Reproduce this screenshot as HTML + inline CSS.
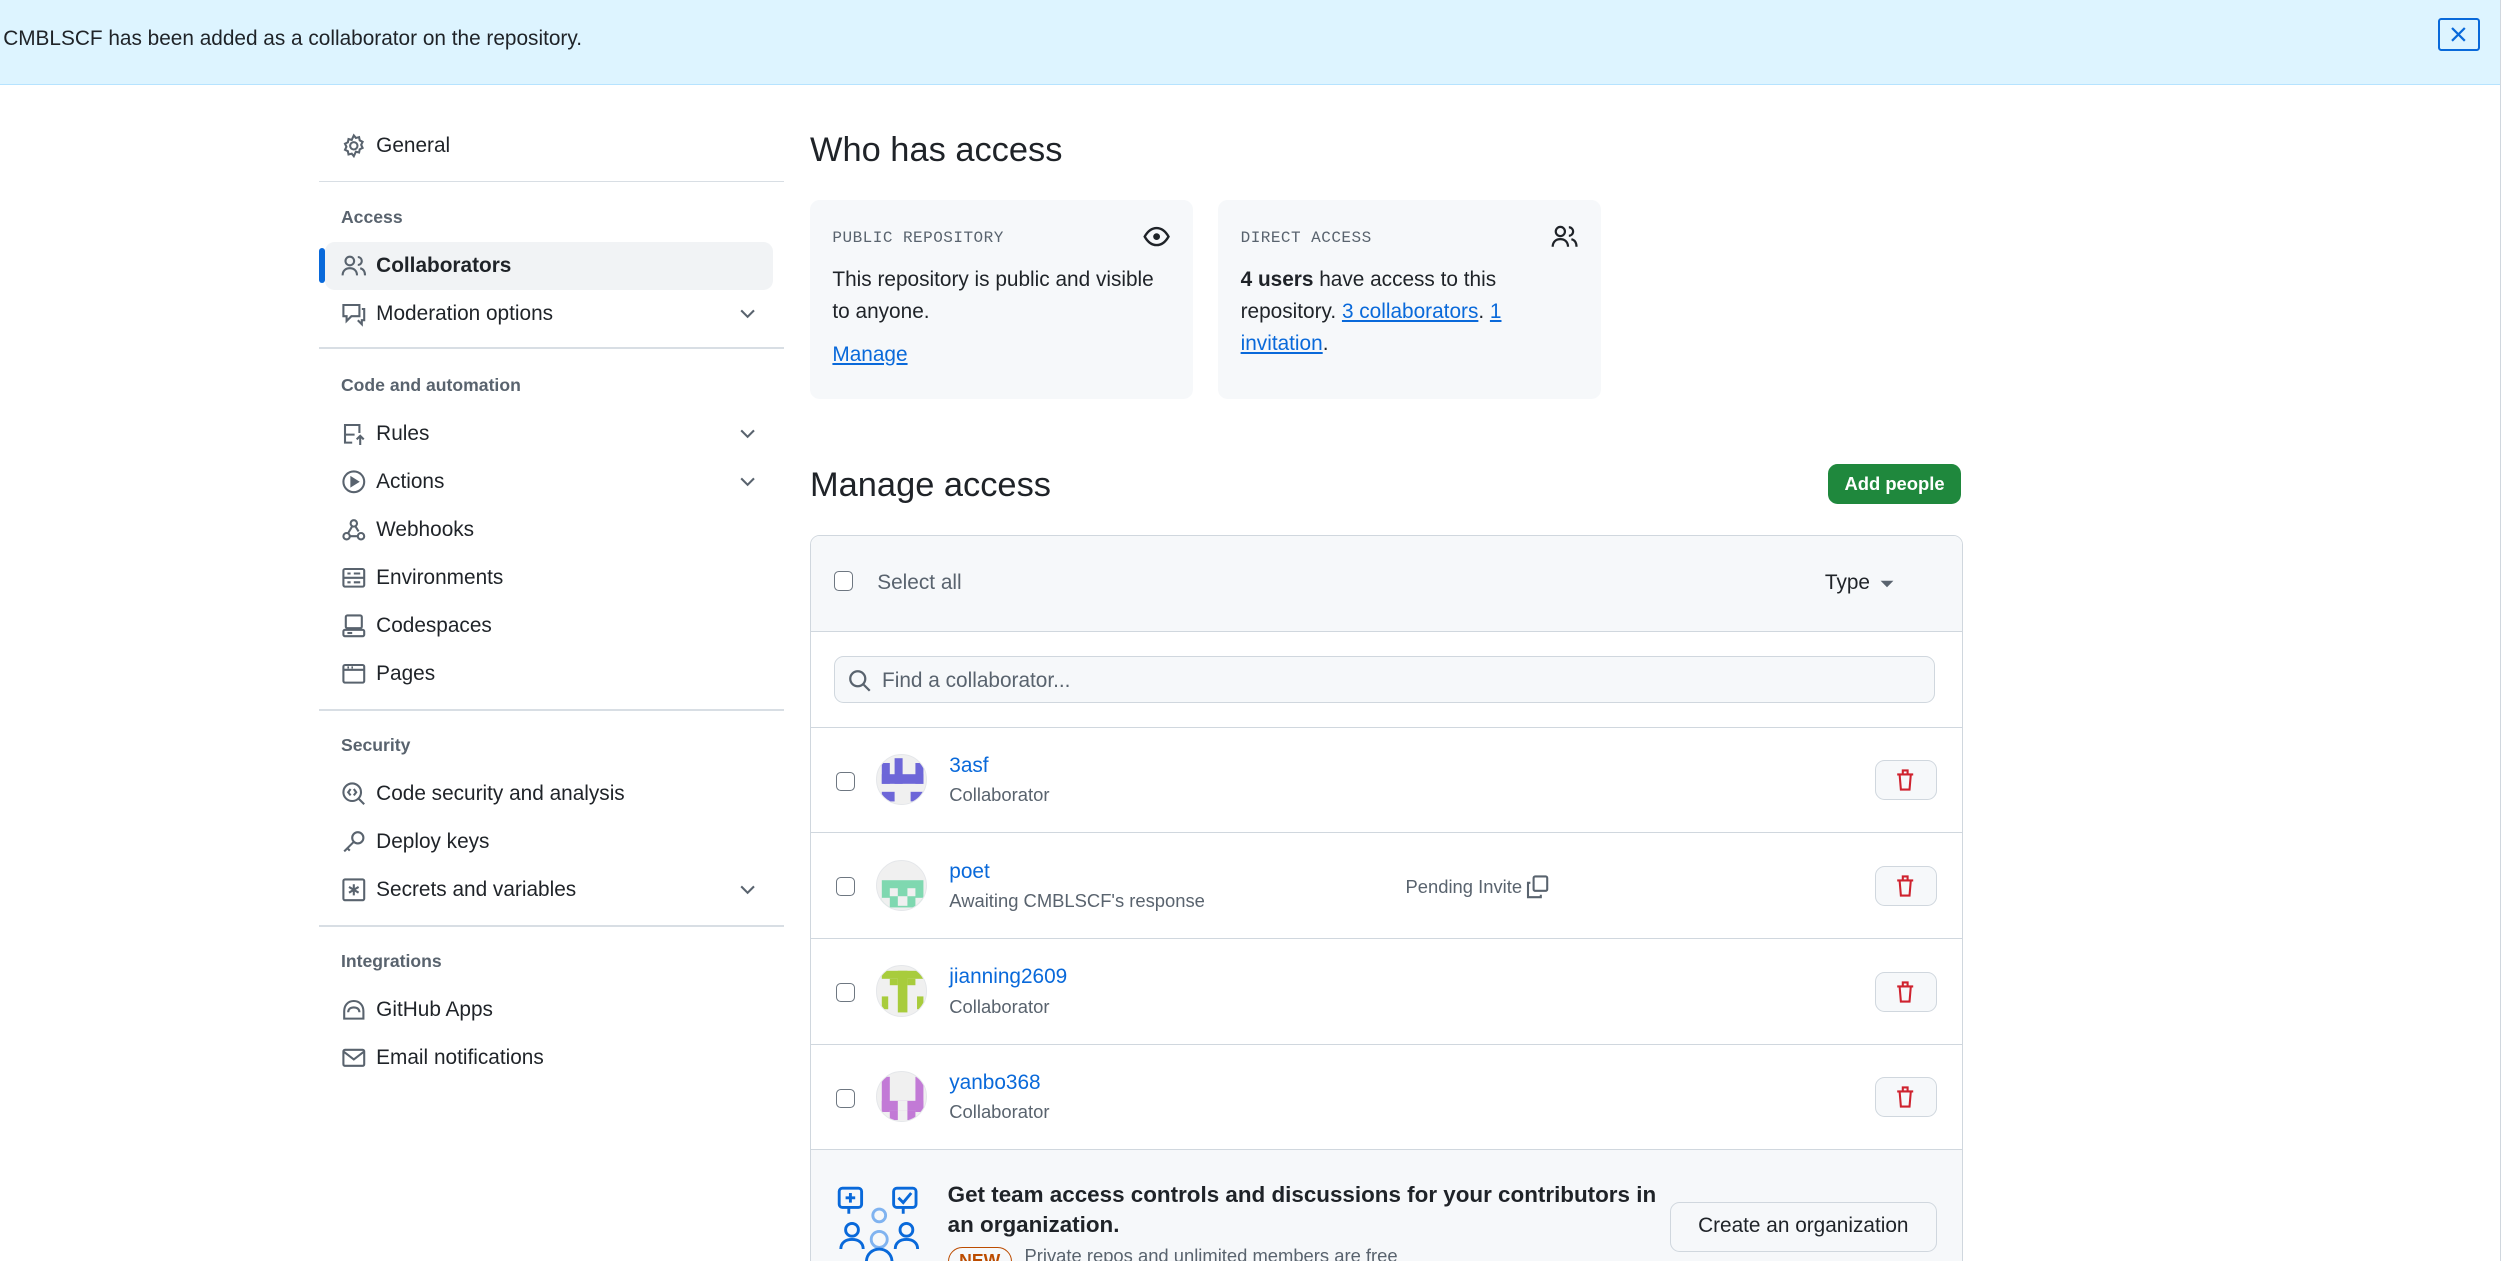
<!DOCTYPE html>
<html><head><meta charset="utf-8"><style>
*{box-sizing:border-box;margin:0;padding:0}
html,body{width:2510px;height:1261px;overflow:hidden;background:#fff}
#w{zoom:1.6008;width:1568px;height:788px;position:relative;font-family:"Liberation Sans",sans-serif;color:#1f2328;font-size:13px}
.a{position:absolute}
.ban{left:0;top:0;width:1562px;height:53px;background:#ddf4ff;border-bottom:1px solid #b6e3ff}
.sb{left:1562px;top:0;width:6px;height:788px;background:#fff;border-left:1px solid #d0d7de}
.nav{left:213px;font-size:13px;display:flex;align-items:center;gap:6px;height:20px}
.nav svg{width:16px;height:16px;fill:none;stroke:#59636e;stroke-width:1.3}
.sec{left:213px;font-size:11px;font-weight:bold;color:#59636e}
.sep{left:199px;width:291px;height:1px;background:#d8dee4}
.chev{left:461px;width:12px;height:12px}
.card{background:#f6f8fa;border-radius:6px;width:239px;height:124px;top:125px}
.lab{font-family:"Liberation Mono",monospace;font-size:10px;color:#59636e;letter-spacing:.3px}
a{color:#0969da;text-decoration:underline}
.row{left:506px;width:720px;height:66px;border-top:1px solid #d0d7de}
.cb{width:12px;height:12px;border:1px solid #6e7781;border-radius:3px;background:#fff}
.av{width:32px;height:32px;border-radius:50%;background:#f0f0f0;overflow:hidden;border:1px solid #e5e7ea}
.tr{width:39px;height:25px;border:1px solid #d0d7de;border-radius:6px;background:#f6f8fa}
</style></head><body><div id="w">
<div class="a ban"></div>
<div class="a" style="left:2px;top:17px;font-size:13px">CMBLSCF has been added as a collaborator on the repository.</div>
<div class="a" style="left:1523px;top:11px;width:26px;height:21px;border:1.5px solid #0969da;border-radius:2px"><svg width="23" height="18" viewBox="0 0 23 18"><path d="M7.5 5l8 8M15.5 5l-8 8" stroke="#0969da" stroke-width="1.4"/></svg></div>
<div class="a sb"></div>

<div class="a" style="left:203px;top:151px;width:280px;height:30px;background:#f1f3f5;border-radius:6px"></div>
<div class="a" style="left:199px;top:155px;width:4px;height:22px;background:#0969da;border-radius:2px"></div>
<div class="a nav" style="top:81px"><svg viewBox="0 0 16 16"><circle cx="8" cy="8" r="2.3"/><path d="M8 1.5l1.3 1.6 2-.5.4 2 1.8.9-.9 1.9.9 1.9-1.8.9-.4 2-2-.5L8 14.5l-1.3-1.6-2 .5-.4-2-1.8-.9.9-1.9-.9-1.9 1.8-.9.4-2 2 .5z"/></svg>General</div>
<div class="a sep" style="top:113px"></div>
<div class="a sec" style="top:129px">Access</div>
<div class="a nav" style="top:156px;font-weight:bold"><svg viewBox="0 0 16 16"><circle cx="5.5" cy="5" r="2.7"/><path d="M1 14c0-3 2-4.5 4.5-4.5S10 11 10 14M10.5 2.5a2.5 2.5 0 010 5M12 9.5c2 .5 3 2 3 4.5"/></svg>Collaborators</div>
<div class="a nav" style="top:186px"><svg viewBox="0 0 16 16"><path d="M1.5 2.5h10v7h-5l-3 3v-3h-2zM13 5h1.5v7h-1.5v2.5l-2.5-2.5"/></svg>Moderation options</div>
<div class="a sep" style="top:217px"></div>
<div class="a sec" style="top:234px">Code and automation</div>
<div class="a nav" style="top:261px"><svg viewBox="0 0 16 16"><path d="M7 13.5H2.5v-11h9v5M2.5 8.5h6M12 15V9.5M9.8 11.5l2.2-2.2 2.2 2.2"/></svg>Rules</div>
<div class="a nav" style="top:291px"><svg viewBox="0 0 16 16"><circle cx="8" cy="8" r="6.5"/><path d="M6.5 5.5v5l4-2.5z" fill="#59636e"/></svg>Actions</div>
<div class="a nav" style="top:321px"><svg viewBox="0 0 16 16"><circle cx="8" cy="4" r="2"/><circle cx="3.5" cy="12" r="2"/><circle cx="12.5" cy="12" r="2"/><path d="M7 5.8L4.5 10M9 5.8L11 9M5.5 12h5"/></svg>Webhooks</div>
<div class="a nav" style="top:351px"><svg viewBox="0 0 16 16"><rect x="1.5" y="2.5" width="13" height="11" rx="1"/><path d="M1.5 8h13M4 5.3h2M4 10.8h2M8 5.3h4M8 10.8h4"/></svg>Environments</div>
<div class="a nav" style="top:381px"><svg viewBox="0 0 16 16"><rect x="3" y="1.5" width="10" height="8" rx="1"/><rect x="1.5" y="10.5" width="13" height="4" rx="1"/><path d="M4 12.5h3"/></svg>Codespaces</div>
<div class="a nav" style="top:411px"><svg viewBox="0 0 16 16"><rect x="1.5" y="2.5" width="13" height="11" rx="1"/><path d="M1.5 5.5h13M4 4h1M6.5 4h1"/></svg>Pages</div>
<div class="a sep" style="top:443px"></div>
<div class="a sec" style="top:459px">Security</div>
<div class="a nav" style="top:486px"><svg viewBox="0 0 16 16"><circle cx="7" cy="7" r="5.5"/><path d="M11 11l3.5 3.5M6 5L4.5 7 6 9M8 5l1.5 2L8 9"/></svg>Code security and analysis</div>
<div class="a nav" style="top:516px"><svg viewBox="0 0 16 16"><circle cx="10.5" cy="5.5" r="3.5"/><path d="M8 8l-6 6M4 12l1.5 1.5"/></svg>Deploy keys</div>
<div class="a nav" style="top:546px"><svg viewBox="0 0 16 16"><rect x="1.5" y="1.5" width="13" height="13" rx="1"/><path d="M8 4.5v7M5 6.2l6 3.6M11 6.2l-6 3.6"/></svg>Secrets and variables</div>
<div class="a sep" style="top:578px"></div>
<div class="a sec" style="top:594px">Integrations</div>
<div class="a nav" style="top:621px"><svg viewBox="0 0 16 16"><path d="M2 9c0-4 2.5-6.5 6-6.5S14 5 14 9v4.5H2zM4.5 9.5c0-2 1.5-3 3.5-3s3.5 1 3.5 3"/></svg>GitHub Apps</div>
<div class="a nav" style="top:651px"><svg viewBox="0 0 16 16"><rect x="1.5" y="3" width="13" height="10" rx="1"/><path d="M1.5 4l6.5 5 6.5-5"/></svg>Email notifications</div>
<svg class="a chev" style="top:190px" viewBox="0 0 12 12"><path d="M2 4l4 4 4-4" fill="none" stroke="#59636e" stroke-width="1.3"/></svg>
<svg class="a chev" style="top:265px" viewBox="0 0 12 12"><path d="M2 4l4 4 4-4" fill="none" stroke="#59636e" stroke-width="1.3"/></svg>
<svg class="a chev" style="top:295px" viewBox="0 0 12 12"><path d="M2 4l4 4 4-4" fill="none" stroke="#59636e" stroke-width="1.3"/></svg>
<svg class="a chev" style="top:550px" viewBox="0 0 12 12"><path d="M2 4l4 4 4-4" fill="none" stroke="#59636e" stroke-width="1.3"/></svg>

<div class="a" style="left:506px;top:82px;font-size:21.5px">Who has access</div>
<div class="a card" style="left:506px"></div>
<div class="a card" style="left:761px"></div>
<div class="a lab" style="left:520px;top:143px">PUBLIC REPOSITORY</div>
<svg class="a" style="left:714px;top:139px" width="17" height="17" viewBox="0 0 16 16"><path d="M1 8c2-3.5 4.5-5 7-5s5 1.5 7 5c-2 3.5-4.5 5-7 5S3 11.5 1 8z" fill="none" stroke="#1f2328" stroke-width="1.4"/><circle cx="8" cy="8" r="2" fill="#1f2328"/></svg>
<div class="a" style="left:520px;top:165px;width:215px;line-height:20px">This repository is public and visible to anyone.</div>
<div class="a" style="left:520px;top:214px"><a>Manage</a></div>
<div class="a lab" style="left:775px;top:143px">DIRECT ACCESS</div>
<svg class="a" style="left:969px;top:139px" width="17" height="17" viewBox="0 0 16 16"><circle cx="5.5" cy="5" r="2.7" fill="none" stroke="#1f2328" stroke-width="1.3"/><path d="M1 14c0-3 2-4.5 4.5-4.5S10 11 10 14M10.5 2.5a2.5 2.5 0 010 5M12 9.5c2 .5 3 2 3 4.5" fill="none" stroke="#1f2328" stroke-width="1.3"/></svg>
<div class="a" style="left:775px;top:165px;width:180px;line-height:20px"><b>4 users</b> have access to this repository. <a>3 collaborators</a>. <a>1 invitation</a>.</div>

<div class="a" style="left:506px;top:291px;font-size:21.5px">Manage access</div>
<div class="a" style="left:1142px;top:290px;width:83px;height:25px;background:#1f883d;border-radius:6px;color:#fff;font-size:11.5px;font-weight:bold;text-align:center;line-height:25px">Add people</div>

<div class="a" style="left:506px;top:334px;width:720px;height:460px;border:1px solid #d0d7de;border-radius:6px 6px 0 0;overflow:hidden">
<div style="height:60px;background:#f6f8fa"></div>
</div>
<div class="a cb" style="left:521px;top:357px"></div>
<div class="a" style="left:548px;top:357px;color:#59636e">Select all</div>
<div class="a" style="left:1140px;top:357px">Type</div>
<svg class="a" style="left:1174px;top:360px" width="10" height="10"><path d="M1 3l4 4 4-4z" fill="#59636e"/></svg>
<div class="a" style="left:506px;top:394px;width:720px;height:1px;background:#d0d7de"></div>
<div class="a" style="left:521px;top:410px;width:688px;height:29px;border:1px solid #d0d7de;border-radius:6px;background:#f6f8fa"></div>
<svg class="a" style="left:530px;top:418px" width="15" height="15" viewBox="0 0 16 16"><circle cx="6.5" cy="6.5" r="5" fill="none" stroke="#59636e" stroke-width="1.5"/><path d="M10.5 10.5l4 4" stroke="#59636e" stroke-width="1.5"/></svg>
<div class="a" style="left:551px;top:418px;color:#59636e">Find a collaborator...</div>

<div class="a row" style="top:454px"></div>
<div class="a row" style="top:520px"></div>
<div class="a row" style="top:586px"></div>
<div class="a row" style="top:652px"></div>
<div class="a" style="left:506px;top:718px;width:720px;height:70px;background:#f6f8fa;border-top:1px solid #d0d7de;border-left:1px solid #d0d7de;border-right:1px solid #d0d7de"></div>

<div class="a cb" style="left:522px;top:482px"></div>
<div class="a av" style="left:547px;top:471px"><svg width="32" height="32"><rect x="3" y="5" width="5" height="13" fill="#6d66d8"/><rect x="24" y="5" width="5" height="13" fill="#6d66d8"/><rect x="11" y="2" width="5" height="16" fill="#6d66d8"/><rect x="3" y="12" width="26" height="6" fill="#6d66d8"/><rect x="3" y="23" width="8" height="6" fill="#6d66d8"/><rect x="21" y="23" width="8" height="6" fill="#6d66d8"/></svg></div>
<div class="a" style="left:593px;top:471px;color:#0969da">3asf</div>
<div class="a" style="left:593px;top:490px;font-size:11.5px;color:#59636e">Collaborator</div>

<div class="a cb" style="left:522px;top:548px"></div>
<div class="a av" style="left:547px;top:537px"><svg width="32" height="32"><rect x="3" y="12" width="26" height="17" fill="#7fd8b0"/><rect x="8" y="17" width="5" height="5" fill="#f0f0f0"/><rect x="19" y="17" width="5" height="5" fill="#f0f0f0"/><rect x="13" y="22" width="6" height="6" fill="#f0f0f0"/><rect x="3" y="23" width="5" height="6" fill="#f0f0f0"/><rect x="24" y="23" width="5" height="6" fill="#f0f0f0"/></svg></div>
<div class="a" style="left:593px;top:537px;color:#0969da">poet</div>
<div class="a" style="left:593px;top:556px;font-size:11.5px;color:#59636e">Awaiting CMBLSCF's response</div>
<div class="a" style="left:878px;top:547px;font-size:11.5px;color:#59636e">Pending Invite</div>
<svg class="a" style="left:952px;top:546px" width="16" height="16" viewBox="0 0 16 16"><rect x="6" y="1.5" width="8.5" height="9" rx="1" fill="none" stroke="#59636e" stroke-width="1.3"/><path d="M4 5.5H2.5v9h8V13" fill="none" stroke="#59636e" stroke-width="1.3"/></svg>

<div class="a cb" style="left:522px;top:614px"></div>
<div class="a av" style="left:547px;top:603px"><svg width="32" height="32"><rect x="3" y="3" width="26" height="5" fill="#a8cc3c"/><rect x="13" y="3" width="6" height="26" fill="#a8cc3c"/><rect x="3" y="19" width="4" height="8" fill="#a8cc3c"/><rect x="25" y="19" width="4" height="8" fill="#a8cc3c"/><rect x="8" y="8" width="5" height="4" fill="#a8cc3c"/><rect x="19" y="8" width="5" height="4" fill="#a8cc3c"/></svg></div>
<div class="a" style="left:593px;top:603px;color:#0969da">jianning2609</div>
<div class="a" style="left:593px;top:622px;font-size:11.5px;color:#59636e">Collaborator</div>

<div class="a cb" style="left:522px;top:680px"></div>
<div class="a av" style="left:547px;top:669px"><svg width="32" height="32"><rect x="3" y="3" width="5" height="22" fill="#c27ad6"/><rect x="24" y="3" width="5" height="22" fill="#c27ad6"/><rect x="3" y="18" width="26" height="6" fill="#c27ad6"/><rect x="8" y="24" width="5" height="6" fill="#c27ad6"/><rect x="19" y="24" width="5" height="6" fill="#c27ad6"/><rect x="13" y="18" width="6" height="6" fill="#f0f0f0"/></svg></div>
<div class="a" style="left:593px;top:669px;color:#0969da">yanbo368</div>
<div class="a" style="left:593px;top:688px;font-size:11.5px;color:#59636e">Collaborator</div>

<div class="a tr" style="left:1171px;top:475px"></div>
<div class="a tr" style="left:1171px;top:541px"></div>
<div class="a tr" style="left:1171px;top:607px"></div>
<div class="a tr" style="left:1171px;top:673px"></div>
<svg class="a" style="left:1183px;top:480px" width="14" height="15" viewBox="0 0 14 15"><path d="M2 4h10M5.5 4V1.5h3V4M3.5 4l.8 9.5h5.4L10.5 4" fill="none" stroke="#cf222e" stroke-width="1.3"/></svg>
<svg class="a" style="left:1183px;top:546px" width="14" height="15" viewBox="0 0 14 15"><path d="M2 4h10M5.5 4V1.5h3V4M3.5 4l.8 9.5h5.4L10.5 4" fill="none" stroke="#cf222e" stroke-width="1.3"/></svg>
<svg class="a" style="left:1183px;top:612px" width="14" height="15" viewBox="0 0 14 15"><path d="M2 4h10M5.5 4V1.5h3V4M3.5 4l.8 9.5h5.4L10.5 4" fill="none" stroke="#cf222e" stroke-width="1.3"/></svg>
<svg class="a" style="left:1183px;top:678px" width="14" height="15" viewBox="0 0 14 15"><path d="M2 4h10M5.5 4V1.5h3V4M3.5 4l.8 9.5h5.4L10.5 4" fill="none" stroke="#cf222e" stroke-width="1.3"/></svg>

<svg class="a" style="left:522px;top:740px" width="54" height="48" viewBox="0 0 54 48" fill="none" stroke="#0969da" stroke-width="1.8"><rect x="2" y="2" width="14" height="12" rx="2"/><path d="M9 5v6M6 8h6M8 14v4"/><rect x="36" y="2" width="14" height="12" rx="2"/><path d="M39 8l3 3 5-6M42 14v4"/><circle cx="27" cy="19" r="4" stroke="#80b3f0"/><circle cx="10" cy="28" r="4"/><circle cx="44" cy="28" r="4"/><circle cx="27" cy="34" r="5" stroke="#80b3f0"/><path d="M3 40c0-4 3-6 7-6s7 2 7 6M37 40c0-4 3-6 7-6s7 2 7 6M19 48c0-5 4-8 8-8s8 3 8 8"/></svg>
<div class="a" style="left:592px;top:737px;width:450px;font-size:14px;font-weight:bold;line-height:19px">Get team access controls and discussions for your contributors in an organization.</div>
<div class="a" style="left:592px;top:779px;width:40px;height:18px;border:1px solid #bc4c00;border-radius:9px;color:#bc4c00;font-size:11px;font-weight:bold;text-align:center;line-height:16px">NEW</div>
<div class="a" style="left:640px;top:778px;font-size:11.5px;color:#59636e">Private repos and unlimited members are free</div>
<div class="a" style="left:1043px;top:751px;width:167px;height:31px;border:1px solid #d0d7de;border-radius:6px;background:#f6f8fa;text-align:center;line-height:29px;font-size:13px">Create an organization</div>
</div></body></html>
